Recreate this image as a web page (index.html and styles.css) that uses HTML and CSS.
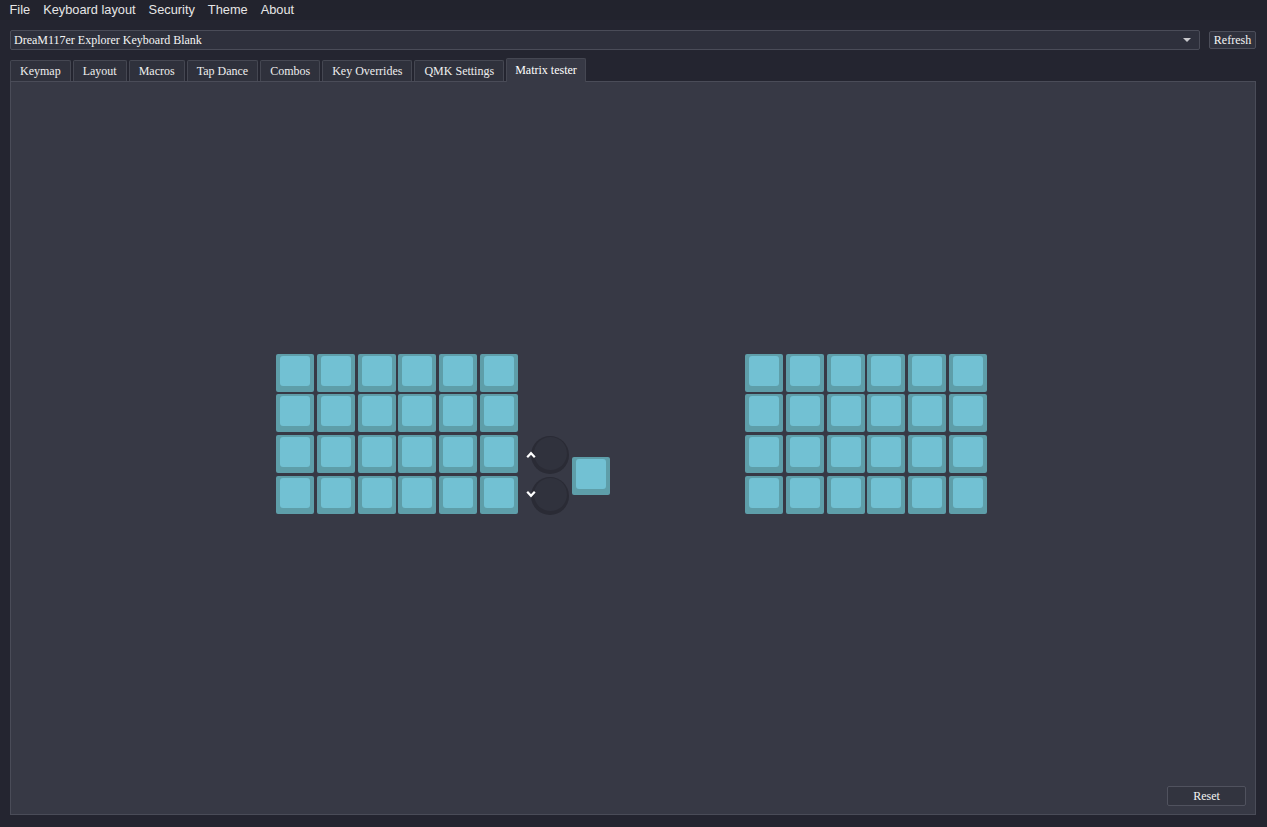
FILE: index.html
```html
<!DOCTYPE html>
<html>
<head>
<meta charset="utf-8">
<link rel="stylesheet" href="styles.css">
</head>
<body>
<div class="app">
  <nav class="menubar">
    <span class="menu-item">File</span>
    <span class="menu-item">Keyboard layout</span>
    <span class="menu-item">Security</span>
    <span class="menu-item">Theme</span>
    <span class="menu-item">About</span>
  </nav>
  <div class="device-row">
    <div class="combo">
      <span class="combo-text">DreaM117er Explorer Keyboard Blank</span>
      <span class="combo-arrow"></span>
    </div>
    <button class="btn refresh">Refresh</button>
  </div>
  <div class="tabs">
    <span class="tab">Keymap</span>
    <span class="tab">Layout</span>
    <span class="tab">Macros</span>
    <span class="tab">Tap Dance</span>
    <span class="tab">Combos</span>
    <span class="tab">Key Overrides</span>
    <span class="tab">QMK Settings</span>
    <span class="tab active">Matrix tester</span>
  </div>
  <section class="panel">
    <div class="kb-area">
      <div class="keyboard">
        <div class="block left">
          <div class="key"></div><div class="key"></div><div class="key"></div><div class="key"></div><div class="key"></div><div class="key"></div>
          <div class="key"></div><div class="key"></div><div class="key"></div><div class="key"></div><div class="key"></div><div class="key"></div>
          <div class="key"></div><div class="key"></div><div class="key"></div><div class="key"></div><div class="key"></div><div class="key"></div>
          <div class="key"></div><div class="key"></div><div class="key"></div><div class="key"></div><div class="key"></div><div class="key"></div>
        </div>
        <div class="encoder enc-up">
          <div class="knob"></div>
          <svg class="chev" width="10" height="8" viewBox="0 0 10 8"><path d="M1.2 6.3 L5 2.2 L8.8 6.3" fill="none" stroke="#ffffff" stroke-width="2.2"/></svg>
        </div>
        <div class="encoder enc-down">
          <div class="knob"></div>
          <svg class="chev" width="10" height="8" viewBox="0 0 10 8"><path d="M1.2 1.7 L5 5.8 L8.8 1.7" fill="none" stroke="#ffffff" stroke-width="2.2"/></svg>
        </div>
        <div class="key solo"></div>
        <div class="block right">
          <div class="key"></div><div class="key"></div><div class="key"></div><div class="key"></div><div class="key"></div><div class="key"></div>
          <div class="key"></div><div class="key"></div><div class="key"></div><div class="key"></div><div class="key"></div><div class="key"></div>
          <div class="key"></div><div class="key"></div><div class="key"></div><div class="key"></div><div class="key"></div><div class="key"></div>
          <div class="key"></div><div class="key"></div><div class="key"></div><div class="key"></div><div class="key"></div><div class="key"></div>
        </div>
      </div>
    </div>
    <div class="panel-foot">
      <button class="btn reset">Reset</button>
    </div>
  </section>
</div>
</body>
</html>
```

FILE: styles.css
```css
* { box-sizing: border-box; }
html, body {
  margin: 0;
  padding: 0;
  width: 1267px;
  height: 827px;
  overflow: hidden;
  background: #242530;
}
.app {
  display: flex;
  flex-direction: column;
  height: 827px;
  font-family: "Liberation Serif", serif;
  font-size: 12px;
  color: #f2f2f2;
}
.menubar {
  height: 20px;
  display: flex;
  align-items: center;
  padding-left: 3px;
  background: #22232d;
  font-family: "Liberation Sans", Arial, sans-serif;
  font-size: 12.8px;
  color: #e6e6e6;
}
.menu-item {
  padding: 0 6.5px;
  line-height: 20px;
}
.device-row {
  display: flex;
  align-items: center;
  margin: 10px 11px 0 10px;
  height: 20px;
  gap: 9px;
}
.combo {
  flex: 1;
  height: 20px;
  display: flex;
  align-items: center;
  justify-content: space-between;
  background: #2e303c;
  border: 1px solid #4a4c58;
  border-radius: 2px;
  padding: 0 8px 0 3px;
}
.combo-text {
  line-height: 18px;
  color: #f4f4f4;
}
.combo-arrow {
  width: 0;
  height: 0;
  border-left: 4px solid transparent;
  border-right: 4px solid transparent;
  border-top: 4px solid #c8c8cc;
}
.btn {
  font-family: "Liberation Serif", serif;
  font-size: 12px;
  color: #f4f4f4;
  background: #2f313d;
  border: 1px solid #4c4e5a;
  border-radius: 2px;
  padding: 0;
}
.refresh {
  width: 47px;
  height: 18px;
  line-height: 16px;
}
.tabs {
  display: flex;
  align-items: flex-end;
  margin: 7px 0 0 10px;
  height: 24px;
  gap: 2px;
}
.tab {
  height: 21px;
  line-height: 20px;
  padding: 0 9px;
  background: #2f313c;
  border: 1px solid #454752;
  border-bottom: none;
  border-radius: 2px 2px 0 0;
  color: #eeeeee;
}
.tab.active {
  height: 24px;
  line-height: 22px;
  padding: 0 8px;
  background: #373945;
  color: #ffffff;
  position: relative;
  top: 1px;
  z-index: 1;
}
.panel {
  flex: 1;
  margin: 0 11px 12px 10px;
  background: #373945;
  border: 1px solid #4a4c58;
  display: flex;
  flex-direction: column;
}
.kb-area {
  flex: 1;
  display: flex;
  align-items: center;
  justify-content: center;
}
.keyboard {
  position: relative;
  width: 711px;
  height: 161px;
  margin-left: -3px;
}
.block {
  position: absolute;
  top: 0;
  display: grid;
  grid-template-columns: repeat(6, 38px);
  grid-auto-rows: 38px;
  column-gap: 2.8px;
  row-gap: 2.8px;
}
.block.left { left: 0; }
.block.right { left: 469px; }
.key {
  width: 38px;
  height: 38px;
  background: #5e9ea9;
  border-radius: 2px;
  position: relative;
}
.key::after {
  content: "";
  position: absolute;
  left: 4px;
  right: 4px;
  top: 2px;
  bottom: 6px;
  background: #72c1d3;
  border-radius: 3px;
}
.key.solo {
  position: absolute;
  left: 296px;
  top: 103px;
}
.encoder {
  position: absolute;
  left: 250px;
  width: 43px;
  height: 38px;
}
.enc-up { top: 82px; }
.enc-down { top: 123px; }
.knob {
  position: absolute;
  left: 5px;
  top: 0;
  width: 38px;
  height: 38px;
  border-radius: 50%;
  background: #2a2b35;
}
.knob::after {
  content: "";
  position: absolute;
  left: 3px;
  top: 1px;
  width: 33px;
  height: 33px;
  border-radius: 50%;
  background: #30323d;
}
.chev {
  position: absolute;
  left: 0;
  z-index: 2;
}
.enc-up .chev { top: 15px; }
.enc-down .chev { top: 13px; }
.panel-foot {
  display: flex;
  justify-content: flex-end;
  padding: 0 9px 8px 0;
}
.reset {
  width: 79px;
  height: 20px;
  line-height: 18px;
  background: #32343f;
  border-color: #50525e;
}
```
